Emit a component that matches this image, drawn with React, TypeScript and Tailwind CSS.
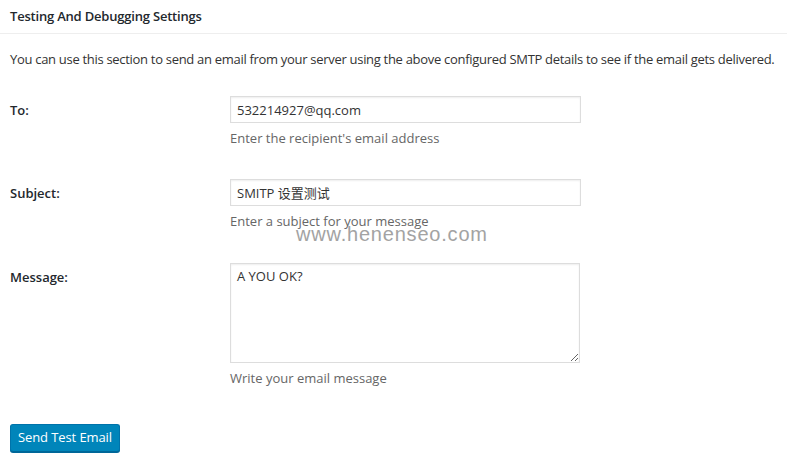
import { useState } from "react"

type Field = {
  label: string
  hint: string
}

const App = () => {
  const [to, setTo] = useState("532214927@qq.com")
  const [subject, setSubject] = useState("SMITP 设置测试")
  const [message, setMessage] = useState("A YOU OK?")

  const fields: Record<string, Field> = {
    to: { label: "To:", hint: "Enter the recipient's email address" },
    subject: { label: "Subject:", hint: "Enter a subject for your message" },
    message: { label: "Message:", hint: "Write your email message" },
  }

  return (
    <div className="relative w-[787px] h-[472px] bg-white text-[13px] text-[#333] font-['Open_Sans','Noto_Sans_CJK_SC',sans-serif] overflow-hidden">
      <div className="h-[34px] border-b border-[#eee] px-[10px] flex items-center">
        <h3 className="text-[13px] font-semibold text-[#23282d] tracking-[-0.2px]">Testing And Debugging Settings</h3>
      </div>

      <p className="px-[10px] mt-[16px] leading-[18px] tracking-[-0.3px] whitespace-nowrap">
        You can use this section to send an email from your server using the above configured SMTP details to see if the email gets delivered.
      </p>

      <div className="mt-[28px] flex flex-col">
        <div className="flex">
          <label className="w-[230px] pl-[10px] pt-[5px] font-semibold text-[#23282d]">{fields.to.label}</label>
          <div className="flex flex-col">
            <input
              value={to}
              onChange={(e) => setTo(e.target.value)}
              className="w-[351px] h-[27px] border border-[#ddd] px-[6px] text-[#333] outline-none shadow-[inset_0_1px_2px_rgba(0,0,0,0.07)]"
            />
            <p className="mt-[6px] text-[#666]">{fields.to.hint}</p>
          </div>
        </div>

        <div className="flex mt-[30px]">
          <label className="w-[230px] pl-[10px] pt-[5px] font-semibold text-[#23282d]">{fields.subject.label}</label>
          <div className="flex flex-col">
            <input
              value={subject}
              onChange={(e) => setSubject(e.target.value)}
              className="w-[351px] h-[27px] border border-[#ddd] px-[6px] text-[#333] outline-none shadow-[inset_0_1px_2px_rgba(0,0,0,0.07)]"
            />
            <p className="mt-[6px] text-[#666]">{fields.subject.hint}</p>
          </div>
        </div>

        <div className="flex mt-[32px]">
          <label className="w-[230px] pl-[10px] pt-[5px] font-semibold text-[#23282d]">{fields.message.label}</label>
          <div className="flex flex-col">
            <textarea
              value={message}
              onChange={(e) => setMessage(e.target.value)}
              className="w-[350px] h-[100px] border border-[#ddd] px-[6px] py-[3px] text-[#333] outline-none resize-y shadow-[inset_0_1px_2px_rgba(0,0,0,0.07)]"
            />
            <p className="mt-[6px] text-[#666]">{fields.message.hint}</p>
          </div>
        </div>
      </div>

      <div className="px-[10px] mt-[35px]">
        <button className="h-[28px] px-[7px] rounded-[3px] bg-[#0085ba] border border-[#0073aa] border-b-[#006799] text-white text-[13px] tracking-[-0.1px] shadow-[0_1px_0_#006799]">
          Send Test Email
        </button>
      </div>

      {/* watermark */}
      <div className="absolute left-[296px] top-[219px] text-[20px] text-[#a3a3a3] font-['Liberation_Sans',sans-serif] tracking-[0.8px] pointer-events-none">
        www.henenseo.com
      </div>
    </div>
  )
}

export default App
